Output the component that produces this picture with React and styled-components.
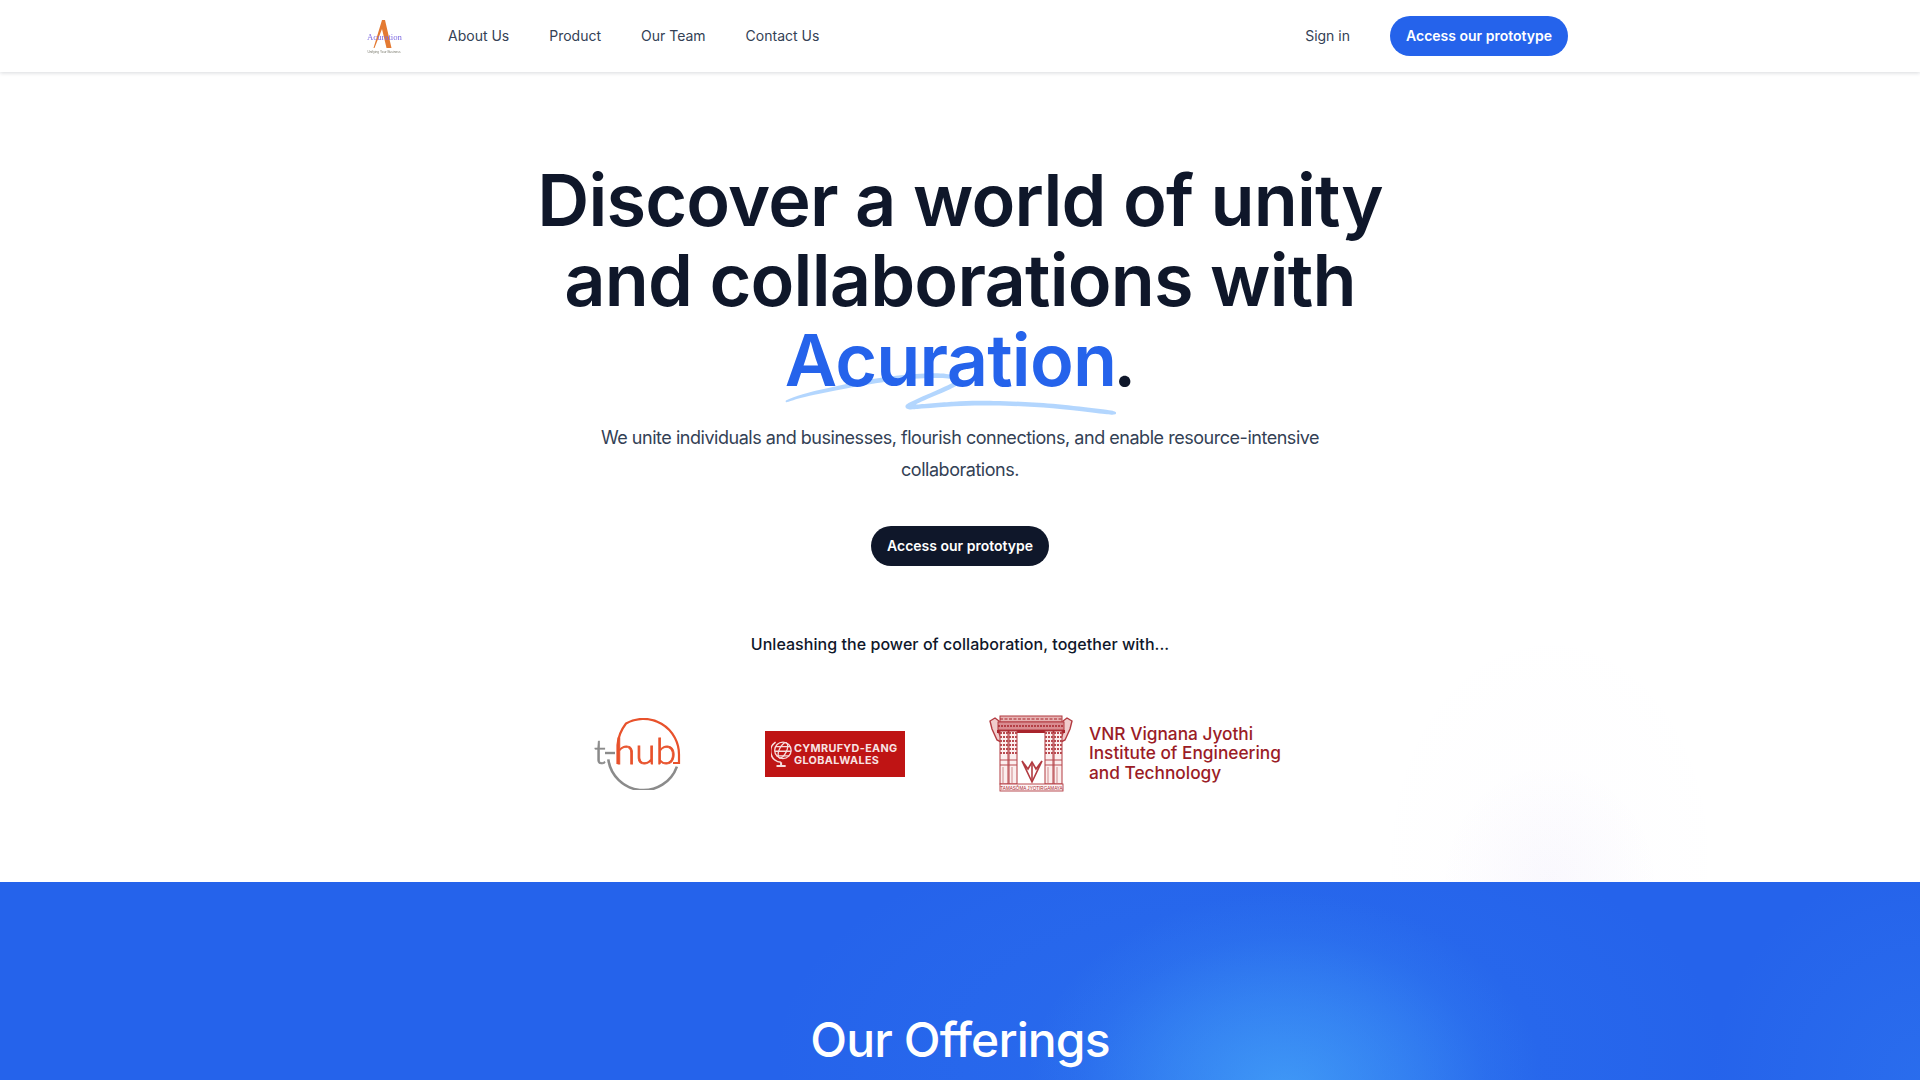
import styled, { createGlobalStyle } from "styled-components";

const GlobalStyle = createGlobalStyle`
  * { box-sizing: border-box; }
  html, body { margin: 0; padding: 0; background: #fff; }
  body { font-family: Inter, "Liberation Sans", sans-serif; color: #0f172a; }
`;

const navLinks = ["About Us", "Product", "Our Team", "Contact Us"];

function AcurationLogo() {
  return (
    <LogoBox>
      <svg width="64" height="48" viewBox="0 0 64 48">
        <path d="M30 8 L33 8 L39.5 36 L34.5 36 L30 17 L22.5 36 L21.5 36 Z" fill="#e47a32" />
        <text x="32.5" y="27.5" textAnchor="middle" fontSize="8.6" textLength="35" lengthAdjust="spacingAndGlyphs" fontFamily="Liberation Serif, serif" fill="#7f6ce2">
          Acuration
        </text>
        <text x="32" y="40.5" textAnchor="middle" fontSize="2.8" textLength="33" lengthAdjust="spacingAndGlyphs" fontFamily="Liberation Sans, sans-serif" fill="#77776a">
          Unifying Your Business
        </text>
      </svg>
    </LogoBox>
  );
}

function THubLogo() {
  return (
    <THubSvg width="88" height="72" viewBox="0 0 88 72">
      <path d="M24.5 46 L24.5 27 C25 20 28 12 33 5.5 A35.5 35.5 0 0 1 86 36.5 L86 45 L80 45" fill="none" stroke="#e8522c" strokeWidth="2.2" />
      <path d="M83.9 48.6 A35.5 35.5 0 0 1 15.3 41.4" fill="none" stroke="#8b8b8b" strokeWidth="2.6" />
      <text x="1" y="46" fontSize="34" fontWeight="300" stroke="#8b8b8b" strokeWidth="0.7" fontFamily="Lato, sans-serif" fill="#8b8b8b">t</text>
      <path d="M12 35 L22 35" stroke="#8b8b8b" strokeWidth="2.4" />
      <text x="22" y="46" fontSize="36" fontWeight="300" textLength="61" lengthAdjust="spacingAndGlyphs" stroke="#e8522c" strokeWidth="0.8" fontFamily="Lato, sans-serif" fill="#e8522c">hub</text>
    </THubSvg>
  );
}

function GlobeIcon() {
  return (
    <svg width="22" height="28" viewBox="0 0 24 30" fill="none" stroke="#f6dcdc" strokeWidth="1.4">
      <circle cx="13" cy="11" r="9" />
      <ellipse cx="13" cy="11" rx="4" ry="9" transform="rotate(25 13 11)" />
      <path d="M5 7 L21 7 M4 12 L22 12 M6 17 L20 17" />
      <path d="M5 2 A12 12 0 0 0 11 24" strokeWidth="1.8" />
      <path d="M11 24 L11 27 M6 28 L16 28" strokeWidth="2.2" />
    </svg>
  );
}

function VnrPier({ x }) {
  const rows = [18, 22, 26, 30, 34, 38];
  return (
    <g>
      <rect x={x} y="16" width="8" height="53" fill="#fbeeee" stroke="#b23a40" strokeWidth="1" />
      <rect x={x + 9} y="16" width="8" height="53" fill="#fbeeee" stroke="#b23a40" strokeWidth="1" />
      {rows.map((y) => (
        <path key={y} d={`M${x} ${y} h17`} stroke="#b84a50" strokeWidth="1.8" strokeDasharray="2 1" />
      ))}
      <path d={`M${x} 45 h17 M${x} 50 h17`} stroke="#b84a50" strokeWidth="1" />
      <path d={`M${x + 3} 52 v16 M${x + 12} 52 v16`} stroke="#d08a8c" strokeWidth="1" />
    </g>
  );
}

function VnrEmblem() {
  return (
    <svg width="84" height="78" viewBox="0 0 84 78" fill="none" stroke="#b23a40">
      <path d="M1 6 L6 3 L10 6 L10 18 L14 28 L8 25 L3 14 Z" strokeWidth="1.4" fill="#f0cccc" />
      <path d="M83 6 L78 3 L74 6 L74 18 L70 28 L76 25 L81 14 Z" strokeWidth="1.4" fill="#f0cccc" />
      <rect x="11" y="1" width="62" height="6" strokeWidth="1" fill="#e6b3b3" />
      <rect x="9" y="7" width="66" height="8" strokeWidth="1" fill="#d98c90" />
      <path d="M11 4 h62" stroke="#a8242c" strokeWidth="1.2" strokeDasharray="3 1.5" />
      <path d="M9 11 h66" stroke="#a8242c" strokeWidth="1.6" strokeDasharray="2 1" />
      <rect x="8" y="15" width="68" height="3" fill="#a8242c" stroke="none" />
      <VnrPier x={11} />
      <VnrPier x={56} />
      <path d="M33 46 L43 67 L53 46 L47 54 L43 47 L39 54 Z" fill="#fff" strokeWidth="1.6" />
      <path d="M43 66 L43 48" strokeWidth="1.6" />
      <rect x="11" y="69" width="63" height="7" strokeWidth="0.9" fill="#fdf4f4" />
      <text x="42.5" y="74.6" textAnchor="middle" fontSize="4.6" stroke="none" fill="#a8242c" fontFamily="Liberation Sans, sans-serif">
        TAMASŌMA JYOTIRGAMAYA
      </text>
    </svg>
  );
}

export default function App() {
  return (
    <>
      <GlobalStyle />
      <Header>
        <HeaderInner>
          <NavGroup>
            <AcurationLogo />
            <NavLinks>
              {navLinks.map((item) => (
                <NavLink key={item} href="#">
                  {item}
                </NavLink>
              ))}
            </NavLinks>
          </NavGroup>
          <HeaderActions>
            <NavLink href="#">Sign in</NavLink>
            <PillButton href="#" $bg="#2563eb">
              Access our prototype
            </PillButton>
          </HeaderActions>
        </HeaderInner>
      </Header>

      <Hero>
        <Title>
          Discover a world of unity
          <br />
          and collaborations with
          <br />
          <Highlight>
            <Swoosh viewBox="0 0 418 42" preserveAspectRatio="none">
              <path d="M203.371.916c-26.013-2.078-76.686 1.963-124.73 9.946L67.3 12.749C35.421 18.062 18.2 21.766 6.004 25.934 1.244 27.561.828 27.778.874 28.61c.07 1.214.828 1.121 9.595-1.176 9.072-2.377 17.15-3.92 39.246-7.496C123.565 7.986 157.869 4.492 195.942 5.046c7.461.108 19.25 1.696 19.17 2.582-.107 1.183-7.874 4.31-25.75 10.366-21.992 7.45-35.43 12.534-36.701 13.884-2.173 2.308-.202 4.407 4.442 4.734 2.654.187 3.263.157 15.593-.78 35.401-2.686 57.944-3.488 88.365-3.143 46.327.526 75.721 2.23 130.788 7.584 19.787 1.924 20.814 1.98 24.557 1.332l.066-.011c1.201-.203 1.53-1.825.399-2.335-2.911-1.31-4.893-1.604-22.048-3.261-57.509-5.556-87.871-7.36-132.059-7.842-23.239-.254-33.617-.116-50.627.674-11.629.54-42.371 2.494-46.696 2.967-2.359.259 8.133-3.625 26.504-9.81 23.239-7.825 27.934-10.149 28.304-14.005.417-4.348-3.529-6-16.878-7.066Z" />
            </Swoosh>
            <HighlightText>Acuration</HighlightText>
          </Highlight>
          .
        </Title>
        <Lead>
          We unite individuals and businesses, flourish connections, and enable
          resource-intensive collaborations.
        </Lead>
        <HeroAction>
          <PillButton href="#" $bg="#0f172a">
            Access our prototype
          </PillButton>
        </HeroAction>
        <PartnersTitle>Unleashing the power of collaboration, together with...</PartnersTitle>
        <Partners>
          <THubLogo />
          <GlobalWales>
            <GlobeIcon />
            <GlobalWalesText>
              <span>CYMRUFYD-EANG</span>
              <span>GLOBALWALES</span>
            </GlobalWalesText>
          </GlobalWales>
          <Vnr>
            <VnrEmblem />
            <VnrText>
              VNR Vignana Jyothi
              <br />
              Institute of Engineering
              <br />
              and Technology
            </VnrText>
          </Vnr>
        </Partners>
      </Hero>

      <Offerings>
        <OfferingsTitle>Our Offerings</OfferingsTitle>
      </Offerings>
    </>
  );
}

const Header = styled.header`
  position: relative;
  z-index: 2;
  height: 72px;
  background: #fff;
  box-shadow: 0 1px 4px rgba(15, 23, 42, 0.16);
`;

const HeaderInner = styled.div`
  max-width: 1280px;
  height: 100%;
  margin: 0 auto;
  padding: 0 32px;
  display: flex;
  align-items: center;
  justify-content: space-between;
`;

const NavGroup = styled.div`
  display: flex;
  align-items: center;
  gap: 24px;
`;

const LogoBox = styled.a`
  display: flex;
  width: 64px;
  height: 48px;
  filter: blur(0.3px);
`;

const NavLinks = styled.nav`
  display: flex;
  gap: 24px;
`;

const NavLink = styled.a`
  padding: 4px 8px;
  font-size: 14px;
  line-height: 20px;
  color: #334155;
  text-decoration: none;
`;

const HeaderActions = styled.div`
  display: flex;
  align-items: center;
  gap: 32px;
`;

const PillButton = styled.a`
  display: inline-flex;
  align-items: center;
  justify-content: center;
  height: 40px;
  padding: 0 16px;
  border-radius: 999px;
  background: ${(p) => p.$bg};
  color: #fff;
  font-size: 14px;
  font-weight: 600;
  line-height: 20px;
  text-decoration: none;
`;

const Hero = styled.section`
  height: 810px;
  padding-top: 88px;
  text-align: center;
  background:
    radial-gradient(ellipse 110px 120px at 1550px 810px, rgba(124, 92, 220, 0.035), transparent 100%),
    radial-gradient(ellipse 190px 260px at 1550px 790px, rgba(150, 130, 230, 0.012), transparent 100%),
    #fff;
`;

const Title = styled.h1`
  margin: 0;
  font-family: Inter, "Liberation Sans", sans-serif;
  font-size: 72px;
  font-weight: 600;
  line-height: 80px;
  letter-spacing: -0.8px;
  color: #0f172a;
`;

const Highlight = styled.span`
  position: relative;
  display: inline-block;
  margin-right: -3px;
  color: #2563eb;
`;

const HighlightText = styled.span`
  position: relative;
`;

const Swoosh = styled.svg`
  position: absolute;
  left: 0;
  top: 66.6%;
  width: 100%;
  height: 0.58em;
  fill: rgba(147, 197, 253, 0.7);
`;

const Lead = styled.p`
  width: 760px;
  margin: 22px auto 0;
  font-size: 18px;
  line-height: 32px;
  letter-spacing: -0.47px;
  color: #334155;
`;

const HeroAction = styled.div`
  margin-top: 40px;
  display: flex;
  justify-content: center;
`;

const PartnersTitle = styled.p`
  margin: 66px 0 0;
  font-size: 16px;
  font-weight: 500;
  line-height: 24px;
  letter-spacing: 0.05px;
  color: #0f172a;
`;

const Partners = styled.div`
  margin-top: 58px;
  padding-left: 593px;
  display: flex;
  align-items: center;
  gap: 84px;
  height: 80px;
`;

const THubSvg = styled.svg`
  filter: blur(0.3px);
`;

const GlobalWales = styled.div`
  width: 140px;
  height: 46px;
  padding-left: 6px;
  display: flex;
  align-items: center;
  gap: 1px;
  background: #bf1414;
`;

const GlobalWalesText = styled.div`
  display: flex;
  flex-direction: column;
  align-items: flex-start;
  padding-top: 2px;
  font-size: 10.8px;
  font-weight: 700;
  line-height: 12.5px;
  letter-spacing: 0.35px;
  color: #f8e3e3;
`;

const Vnr = styled.div`
  display: flex;
  align-items: center;
  gap: 16px;
`;

const VnrText = styled.div`
  padding-bottom: 2px;
  text-align: left;
  font-size: 17.3px;
  font-weight: 500;
  line-height: 19.5px;
  color: #9b1c26;
  white-space: nowrap;
`;

const Offerings = styled.section`
  height: 198px;
  overflow: hidden;
  padding-top: 128px;
  text-align: center;
  background:
    radial-gradient(ellipse 260px 200px at 1285px 210px, rgba(72, 170, 250, 0.72) 0%, rgba(72, 170, 250, 0.38) 45%, rgba(72, 170, 250, 0.1) 78%, transparent 100%),
    radial-gradient(ellipse 480px 240px at 1250px 170px, rgba(72, 170, 250, 0.12) 0%, rgba(72, 170, 250, 0.05) 65%, transparent 100%),
    radial-gradient(ellipse 220px 220px at 1930px 198px, rgba(72, 170, 250, 0.14) 0%, transparent 100%),
    #2563eb;
`;

const OfferingsTitle = styled.h2`
  margin: 0;
  font-family: Inter, "Liberation Sans", sans-serif;
  font-size: 48px;
  font-weight: 500;
  line-height: 60px;
  letter-spacing: -0.9px;
  color: #fff;
`;
